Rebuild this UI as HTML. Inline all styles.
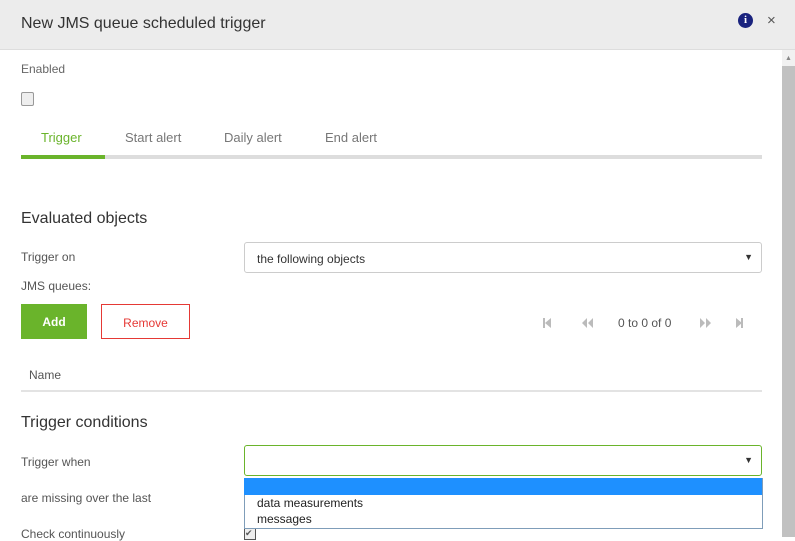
<!DOCTYPE html><html><head><style>
body{margin:0;width:795px;height:537px;overflow:hidden;font-family:"Liberation Sans",sans-serif;font-size:12px;color:#555;background:#fff;position:relative}
.a{position:absolute}
.hdr{left:0;top:0;width:795px;height:49px;background:#ececec;border-bottom:1px solid #ddd}
.sel{border:1px solid #ccc;border-radius:3px;height:31px;box-sizing:border-box;background:#fff}
.arr{position:absolute;right:8px;top:9px;font-size:9px;color:#333}
</style></head><body>
<div class="a hdr"></div>
<div class="a" style="left:21px;top:15px;font-size:16px;color:#333">New JMS queue scheduled trigger</div>
<div class="a" style="left:738px;top:13px;width:15px;height:15px;border-radius:50%;background:#1a237e;color:#fff;font-size:11px;font-weight:bold;text-align:center;line-height:15px;font-family:'Liberation Serif',serif">i</div>
<div class="a" style="left:767px;top:12px;font-size:15px;color:#555">×</div>
<div class="a" style="left:782px;top:50px;width:13px;height:487px;background:#f1f1f1"></div>
<div class="a" style="left:782px;top:66px;width:13px;height:471px;background:#c1c1c1"></div>
<div class="a" style="left:785px;top:55px;font-size:7px;color:#888">▲</div>
<div class="a" style="left:21px;top:62px;color:#666">Enabled</div>
<div class="a" style="left:21px;top:92px;width:11px;height:12px;border:1px solid #999;border-radius:2px;background:#eee"></div>
<div class="a" style="left:41px;top:130px;font-size:13px;color:#6ab42b">Trigger</div>
<div class="a" style="left:125px;top:130px;font-size:13px;color:#777">Start alert</div>
<div class="a" style="left:224px;top:130px;font-size:13px;color:#777">Daily alert</div>
<div class="a" style="left:325px;top:130px;font-size:13px;color:#777">End alert</div>
<div class="a" style="left:21px;top:155px;width:741px;height:4px;background:#ddd"></div>
<div class="a" style="left:21px;top:155px;width:84px;height:4px;background:#6ab42b"></div>
<div class="a" style="left:21px;top:210px;font-size:16px;color:#333">Evaluated objects</div>
<div class="a" style="left:21px;top:250px;color:#555">Trigger on</div>
<div class="a sel" style="left:244px;top:242px;width:518px"><span class="a" style="left:12px;top:9px;color:#333">the following objects</span><span class="arr">▼</span></div>
<div class="a" style="left:21px;top:279px">JMS queues:</div>
<div class="a" style="left:21px;top:304px;width:66px;height:35px;background:#6ab42b;color:#fff;font-weight:bold;text-align:center;line-height:37px">Add</div>
<div class="a" style="left:101px;top:304px;width:87px;height:33px;border:1px solid #e53935;color:#e53935;text-align:center;line-height:37px">Remove</div>
<svg class="a" style="left:540px;top:316px" width="210" height="14" fill="#bbb">
<rect x="3" y="2" width="2" height="10"/><path d="M11 2 L5 7 L11 12Z"/>
<path d="M47 2 L42 7 L47 12Z M53 2 L48 7 L53 12Z"/>
<path d="M160 2 L165 7 L160 12Z M166 2 L171 7 L166 12Z"/>
<path d="M196 2 L202 7 L196 12Z"/><rect x="201" y="2" width="2" height="10"/>
</svg>
<div class="a" style="left:618px;top:316px;color:#555">0 to 0 of 0</div>
<div class="a" style="left:29px;top:368px">Name</div>
<div class="a" style="left:21px;top:390px;width:741px;height:2px;background:#e3e3e3"></div>
<div class="a" style="left:21px;top:414px;font-size:16px;color:#333">Trigger conditions</div>
<div class="a" style="left:21px;top:455px">Trigger when</div>
<div class="a sel" style="left:244px;top:445px;width:518px;border-color:#6ab42b"><span class="arr">▼</span></div>
<div class="a" style="left:21px;top:491px">are missing over the last</div>
<div class="a" style="left:21px;top:527px">Check continuously</div>
<div class="a" style="left:244px;top:528px;width:10px;height:10px;border:1px solid #555;background:#eee;font-size:9px;line-height:8px">✔</div>
<div class="a" style="left:244px;top:478px;width:517px;height:50px;border:1px solid #7f9db9;background:#fff;border-top:0"></div>
<div class="a" style="left:244px;top:478px;width:518px;height:17px;background:#1e90ff"></div>
<div class="a" style="left:257px;top:496px;color:#222">data measurements</div>
<div class="a" style="left:257px;top:512px;color:#222">messages</div>
</body></html>
